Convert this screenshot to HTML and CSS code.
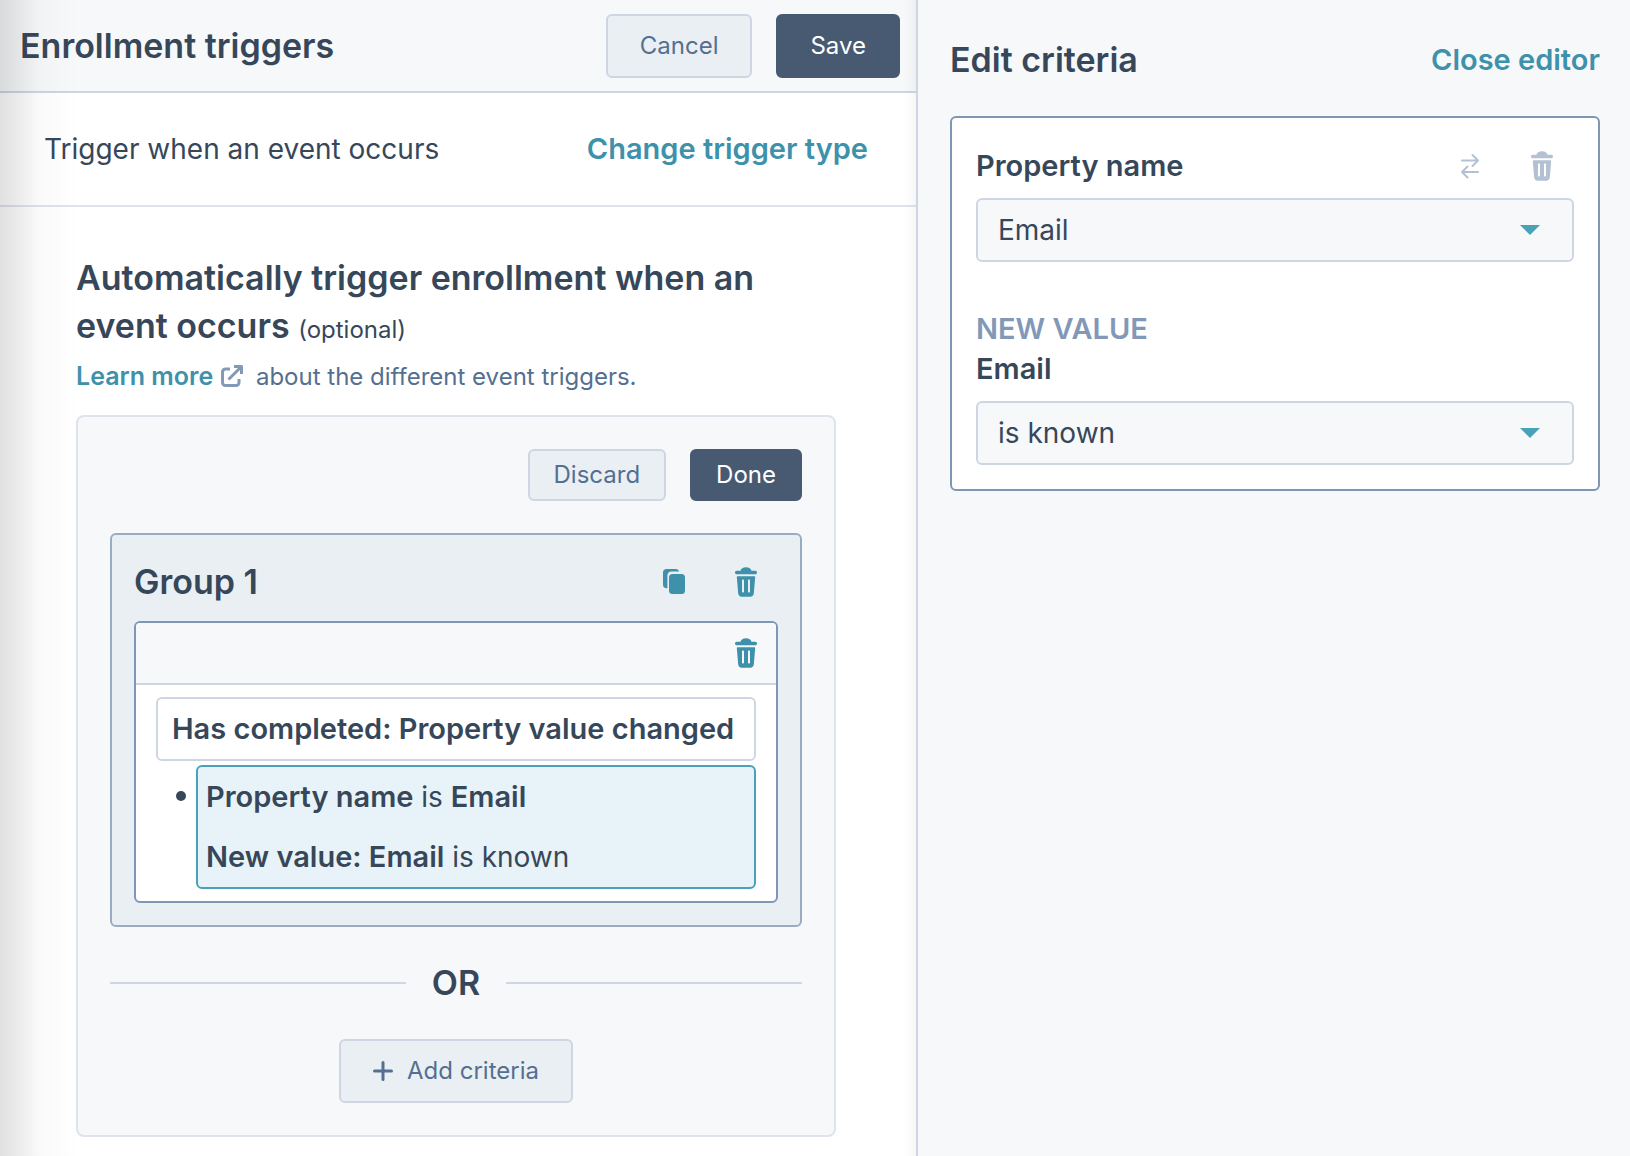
FILE: index.html
```html
<!DOCTYPE html>
<html lang="en">
<head>
<meta charset="utf-8">
<meta name="viewport" content="width=device-width, initial-scale=1">
<title>Enrollment triggers</title>
<link rel="stylesheet" href="styles.css">
</head>
<body>
<svg class="sprite" aria-hidden="true">
  <symbol id="icon-trash" viewBox="0 0 22 30">
    <path d="M1.700 3.700H5.500C6 1.500 8 .3 11 .3s5 1.200 5.500 3.400h3.800c1 0 1.700.8 1.700 1.800s-.7 1.800-1.700 1.800H1.700C.7 7.300 0 6.500 0 5.500s.7-1.800 1.700-1.800z"/>
    <path fill-rule="evenodd" d="M2.500 9.300h17c.4 0 .7.300.7.700l-1.400 16.500c-.2 2-1.600 3.200-3.400 3.200H6.600c-1.800 0-3.200-1.200-3.400-3.200L1.800 10c0-.4.300-.7.700-.7zM8 12.400c-.6 0-1 .4-1 1v11.200c0 .6.400 1 1 1s1-.4 1-1V13.400c0-.6-.4-1-1-1zm6 0c-.6 0-1 .4-1 1v11.200c0 .6.400 1 1 1s1-.4 1-1V13.400c0-.6-.4-1-1-1z"/>
  </symbol>
  <symbol id="icon-copy" viewBox="0 0 22 26">
    <path d="M3.500 0h9.500c1.500 0 2.700 1 3 2.600H8.500C6 2.600 4.400 4.200 4.400 6.700v12.600H3.500C1.400 19.300 0 17.900 0 15.800V3.500C0 1.400 1.400 0 3.500 0z"/>
    <rect x="6" y="5" width="16" height="20" rx="3.500"/>
  </symbol>
  <symbol id="icon-swap" viewBox="0 0 20 26">
    <path fill="none" stroke="currentColor" stroke-width="2" stroke-linecap="round" stroke-linejoin="round" d="M2 7.500h16M12.500 2 18 7.500 12.500 13M18 19H2M7.500 13.500 2 19l5.500 5.500"/>
  </symbol>
</svg>

<div class="app">
  <main class="triggers">
    <header class="triggers-header">
      <h1 class="title">Enrollment triggers</h1>
      <div class="actions">
        <button type="button" class="btn">Cancel</button>
        <button type="button" class="btn btn-primary">Save</button>
      </div>
    </header>

    <div class="trigger-type">
      <span>Trigger when an event occurs</span>
      <a href="#" class="link">Change trigger type</a>
    </div>

    <section class="triggers-body">
      <h2 class="title">Automatically trigger enrollment when an event occurs <small class="optional">(optional)</small></h2>
      <p class="help"><a href="#" class="link">Learn more<svg class="external" viewBox="0 0 22 22" aria-hidden="true"><path d="M9 4H4.500A3 3 0 0 0 1.500 7v10.500a3 3 0 0 0 3 3H15a3 3 0 0 0 3-3V14M7.500 14.500 19 3M13 1.500h7.500V9"/></svg></a> about the different event triggers.</p>

      <div class="builder">
        <div class="actions">
          <button type="button" class="btn btn-small">Discard</button>
          <button type="button" class="btn btn-small btn-primary">Done</button>
        </div>

        <section class="group">
          <header class="group-header">
            <h3 class="title">Group 1</h3>
            <div class="icon-row">
              <button type="button" class="icon-btn" aria-label="Clone group"><svg class="icon-copy"><use href="#icon-copy"/></svg></button>
              <button type="button" class="icon-btn" aria-label="Delete group"><svg class="icon-trash"><use href="#icon-trash"/></svg></button>
            </div>
          </header>
          <div class="criteria">
            <div class="criteria-header">
              <button type="button" class="icon-btn" aria-label="Delete criteria"><svg class="icon-trash"><use href="#icon-trash"/></svg></button>
            </div>
            <div class="criteria-body">
              <div class="event"><b>Has completed: Property value changed</b></div>
              <ul class="filters">
                <li><div class="filter">
                  <p><b>Property name</b> is <b>Email</b></p>
                  <p><b>New value: Email</b> is known</p>
                </div></li>
              </ul>
            </div>
          </div>
        </section>

        <div class="divider title">OR</div>

        <button type="button" class="btn btn-add"><svg class="plus" viewBox="0 0 20 20" aria-hidden="true"><path d="M10 1.500v17M1.500 10h17"/></svg>Add criteria</button>
      </div>
    </section>
  </main>

  <aside class="editor">
    <header class="editor-header">
      <h2 class="title">Edit criteria</h2>
      <a href="#" class="link">Close editor</a>
    </header>
    <div class="editor-card">
      <div class="field-header">
        <label for="property">Property name</label>
        <div class="icon-row">
          <button type="button" class="icon-btn icon-muted" aria-label="Replace property"><svg class="icon-swap"><use href="#icon-swap"/></svg></button>
          <button type="button" class="icon-btn icon-muted" aria-label="Delete property"><svg class="icon-trash"><use href="#icon-trash"/></svg></button>
        </div>
      </div>
      <div class="select">
        <select id="property"><option>Email</option></select>
        <svg class="caret" viewBox="0 0 20 10" aria-hidden="true"><path d="M0 0h20L10 10z"/></svg>
      </div>
      <div class="field-group">
        <div class="eyebrow">NEW VALUE</div>
        <label for="operator">Email</label>
      </div>
      <div class="select">
        <select id="operator"><option>is known</option></select>
        <svg class="caret" viewBox="0 0 20 10" aria-hidden="true"><path d="M0 0h20L10 10z"/></svg>
      </div>
    </div>
  </aside>
</div>
</body>
</html>
```
FILE: styles.css
```css
:root {
  --ink: #37475a;
  --slate: #546f91;
  --line: #cdd6e2;
  --line-soft: #dfe3eb;
  --wash: #f6f8fa;
  --panel: #eaeff3;
  --teal: #3e91ab;
  --navy: #475a72;
}

* { box-sizing: border-box; }

body {
  margin: 0;
  color: var(--ink);
  font: 400 28px/40px Inter, "Open Sans", sans-serif;
}

h1, h2, h3, p, ul { margin: 0; }
b, label, .link, .eyebrow { font-size: 29px; font-weight: 600; }
b { line-height: 1; }
svg { display: block; fill: currentColor; }
.sprite { position: absolute; width: 0; height: 0; }

.title { font-size: 34px; line-height: 48px; font-weight: 600; }
.link { color: var(--teal); text-decoration: none; }

.app {
  display: grid;
  grid-template-columns: minmax(0, 918fr) minmax(0, 712fr);
  min-height: 100vh;
}

/* Left pane */
.triggers {
  position: relative;
  border-right: 2px solid var(--line);
  background: #fff;
}
.triggers::before {
  content: "";
  position: absolute;
  inset: 0 auto 0 0;
  width: 80px;
  background: linear-gradient(to right, rgba(0, 0, 0, .12), rgba(0, 0, 0, .08) 22%, rgba(0, 0, 0, .02) 50%, transparent);
  pointer-events: none;
}
.triggers::after {
  content: "";
  position: absolute;
  inset: 0 0 0 auto;
  width: 12px;
  background: linear-gradient(to left, rgba(0, 0, 0, .03), transparent);
  pointer-events: none;
}
.triggers-header {
  display: flex;
  align-items: center;
  justify-content: space-between;
  padding: 14px 16px 13px 20px;
  border-bottom: 2px solid var(--line);
  background: var(--wash);
}
.actions { display: flex; justify-content: flex-end; gap: 24px; }

.btn {
  height: 64px;
  padding: 0 32px;
  border: 2px solid var(--line);
  border-radius: 6px;
  background: var(--panel);
  color: var(--slate);
  font: inherit;
  font-size: 24px;
}
.btn-primary { border-color: var(--navy); background: var(--navy); color: #fff; }
.btn-small { height: 52px; padding: 0 24px; }

.trigger-type {
  display: flex;
  align-items: center;
  justify-content: space-between;
  padding: 36px 48px 36px 44px;
  border-bottom: 2px solid var(--line-soft);
}

.triggers-body { padding: 47px 80px 19px 76px; }
.optional { font-size: 24px; line-height: 24px; font-weight: 400; }
.help {
  margin: 9px 0 20px;
  color: var(--slate);
  font-size: 24px;
  line-height: 36px;
}
.help .link { font-size: 25px; line-height: 1; }
.external {
  display: inline-block;
  width: 22px;
  height: 22px;
  margin: 0 6px 0 8px;
  vertical-align: -2px;
  fill: none;
  stroke: #8499b8;
  stroke-width: 3;
  stroke-linejoin: round;
}

.builder {
  padding: 32px;
  border: 2px solid var(--line-soft);
  border-radius: 8px;
  background: var(--wash);
}
.group {
  margin-top: 32px;
  padding: 22px;
  border: 2px solid #99acc2;
  border-radius: 6px;
  background: var(--panel);
}
.group-header {
  display: flex;
  align-items: center;
  justify-content: space-between;
  margin-bottom: 14px;
  padding-right: 8px;
}
.icon-row { display: flex; gap: 24px; }
.icon-btn {
  display: grid;
  place-items: center;
  width: 48px;
  height: 50px;
  padding: 0;
  border: 0;
  background: none;
  color: var(--teal);
}
.icon-muted { height: 48px; color: #b3c1d3; }
.icon-trash { width: 22px; height: 30px; }
.icon-copy { width: 22px; height: 26px; }
.icon-swap { width: 20px; height: 26px; }

.criteria {
  overflow: hidden;
  border: 2px solid #7f96b5;
  border-radius: 6px;
  background: #fff;
}
.criteria-header {
  display: flex;
  justify-content: flex-end;
  padding: 5px 6px;
  border-bottom: 2px solid var(--line);
  background: var(--wash);
}
.criteria-body { padding: 12px 20px; }
.event {
  padding: 10px 14px;
  border: 2px solid var(--line);
  border-radius: 6px;
}
.filters { margin-top: 4px; padding: 0; list-style: none; }
.filters li { display: flex; }
.filters li::before {
  content: "";
  width: 10px;
  height: 10px;
  margin: 26px 10px 0 20px;
  border-radius: 50%;
  background: var(--ink);
}
.filter {
  flex: 1;
  padding-left: 8px;
  border: 2px solid #4aa2b9;
  border-radius: 6px;
  background: #e7f3f8;
  line-height: 60px;
}

.divider {
  display: flex;
  align-items: center;
  gap: 26px;
  margin: 32px 0;
}
.divider::before,
.divider::after { content: ""; flex: 1; height: 2px; background: var(--line); }

.btn-add {
  display: flex;
  align-items: center;
  gap: 14px;
  margin: 0 auto;
}
.plus {
  width: 20px;
  height: 20px;
  fill: none;
  stroke: currentColor;
  stroke-width: 3;
  stroke-linecap: round;
}

/* Right pane */
.editor { padding: 36px 30px 36px 32px; background: var(--wash); }
.editor-header {
  display: flex;
  align-items: center;
  justify-content: space-between;
  margin-bottom: 32px;
}
.editor-card {
  padding: 24px;
  border: 2px solid #7f96b5;
  border-radius: 6px;
  background: #fff;
}
.field-header {
  display: flex;
  align-items: center;
  justify-content: space-between;
  margin-bottom: 8px;
  padding-right: 8px;
}
.field-group { margin: 47px 0 12px; }
.field-group label { display: block; }
.eyebrow { color: #8298b8; }

.select { position: relative; }
.select select {
  display: block;
  width: 100%;
  height: 64px;
  padding: 0 56px 0 20px;
  border: 2px solid var(--line);
  border-radius: 6px;
  appearance: none;
  background: var(--wash);
  color: inherit;
  font: inherit;
}
.caret {
  position: absolute;
  top: 27px;
  right: 34px;
  width: 20px;
  height: 10px;
  fill: #4aa2b9;
  pointer-events: none;
}
```
